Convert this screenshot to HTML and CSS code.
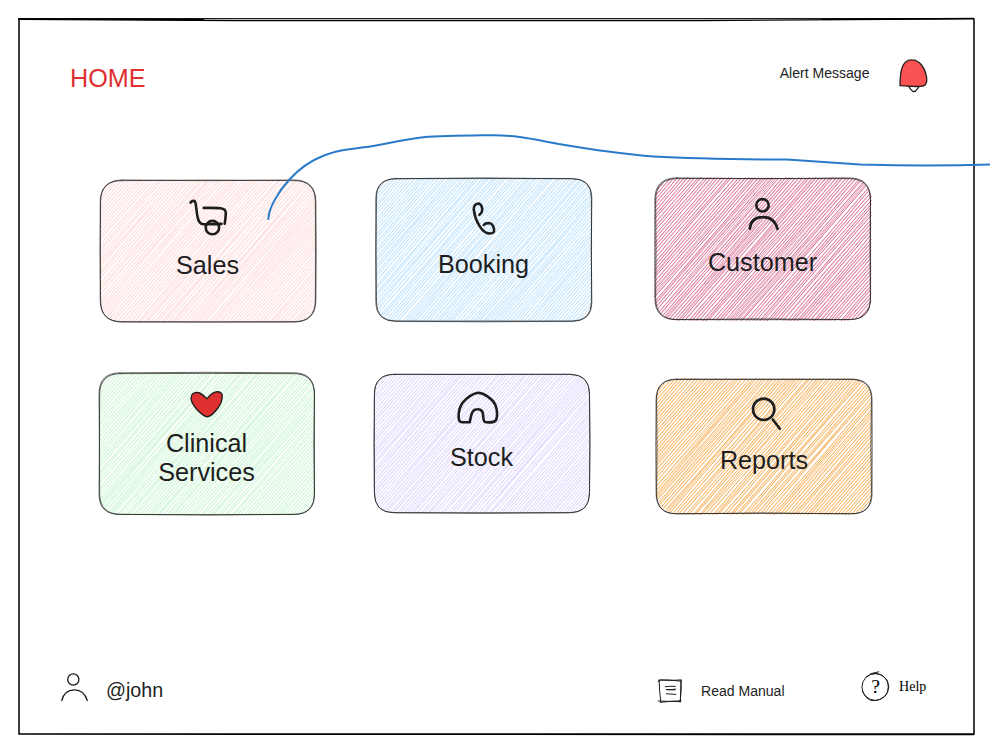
FILE: index.html
```html
<!DOCTYPE html>
<html lang="en">
<head>
<meta charset="utf-8">
<title>Home</title>
<link rel="stylesheet" href="styles.css">
</head>
<body>
<div class="frame">
  <svg class="frame-outline" viewBox="18 16 958 722" aria-hidden="true">
    <path d="M19 18.6V734M974 18.5V734.7M18.3 734L974 734.6M18.3 733.9H974" stroke-width="1.5"/>
    <path d="M18.2 18.5H974" stroke-width="0.9"/>
    <path d="M18.2 19.3C110 19.4 180 20.2 236 20.5H700C800 20.3 900 19.2 974 18.8" stroke-width="1.3"/>
    <path d="M18.2 19Q110 18.8 204 19.6M822 19.4L974 18.4" stroke-width="1.4"/>
  </svg>
  <header class="topbar">
    <h1 class="title">HOME</h1>
    <div class="alert">
      <span class="small-text">Alert Message</span>
      <svg class="icon bell" viewBox="898 56 31 38">
        <path d="M908.7 86.5C910 88 911.5 91.7 914 91.7S917.5 88 919 86.7" stroke-width="1.2"/>
        <path d="M900 85.7C900 78 900.2 71 903 65.5C904.8 61.8 908.5 59.7 911.7 59.8C915.3 59.8 919.2 61.8 921.9 65.5C924.5 69 926 73.5 926.7 78C927 81 926.8 83 925.5 84.7C924.4 86.2 922.5 86.4 920 86.4C914 86.7 907 86.3 900 85.7Z" fill="#fa5252" stroke-width="1.3"/>
      </svg>
    </div>
  </header>

  <main class="tiles">
    <div class="tile-row">
      <a class="tile sales">
        <svg class="sketch" data-w="216" data-h="142" data-seed="11"></svg>
        <svg class="icon" viewBox="188 198 40 40"><path d="M190.6 202.6C191.5 201.3 194 200.2 194.9 201.3C196.4 204.5 196.3 212 197.6 217C198.3 221 199.7 223.8 203 224.2Q212 224.5 221.5 223.9M203.7 207.9C210 208 216 207.7 220.5 208.3C224 208.7 225.8 210 225.8 213Q225.7 218 224.7 223.7"/><circle cx="212.4" cy="227.6" r="6.7"/></svg>
        <span class="label">Sales</span>
      </a>
      <a class="tile booking">
        <svg class="sketch" data-w="216" data-h="144" data-seed="23"></svg>
        <svg class="icon" viewBox="464 200 40 40"><path d="M479.4 214.8C481.4 213.3 482.5 211 482.2 208.5C481.8 205 479.8 203.4 477.5 203.7C474.6 204.4 473.4 207.3 473.9 210.3C474.5 215.2 476.4 220.8 479.3 225.7C481.8 229.8 484.8 233 488.2 233.4C491 233.8 494 233 494.1 231C494.4 228 492.5 223.5 489.8 223.2C487.6 222.9 485 223.3 483.8 225"/></svg>
        <span class="label">Booking</span>
      </a>
      <a class="tile customer">
        <svg class="sketch" data-w="216" data-h="142" data-seed="37"></svg>
        <svg class="icon" viewBox="743.5 194 40 40"><circle cx="763" cy="205.3" r="6.2"/><path d="M750.3 228.7C751 221.5 755.5 217.2 763.2 217.1C771.5 216.8 776 221.5 778 228.9"/></svg>
        <span class="label">Customer</span>
      </a>
    </div>
    <div class="tile-row">
      <a class="tile clinical">
        <svg class="sketch" data-w="216" data-h="142" data-seed="41"></svg>
        <svg class="icon" viewBox="187 385 40 40"><path d="M207 398.7C204.8 397.2 201.5 392.8 197.7 392.5C193.5 392 191 394.6 191 398.5C191.3 402.5 194 406.3 197.2 409.8C200.4 413.2 204.2 416.8 207.6 416.7C211.5 416.5 215 411.8 217.9 408C220.8 404.1 222.5 399.5 222.2 395.4C222 392.5 219.4 391.5 216.2 391.9C212.1 392.4 209.4 395.9 207 398.7Z" fill="#e03131" stroke-width="1.4"/></svg>
        <span class="label">Clinical<br>Services</span>
      </a>
      <a class="tile stock">
        <svg class="sketch" data-w="216" data-h="139" data-seed="59"></svg>
        <svg class="icon" viewBox="462 388 40 40"><path class="store" d="M482.2 392.8C477 393.5 470 398.1 466.8 402.7C463.7 407 462.8 412 462.8 416.5C462.8 420 463.5 422.2 466.3 422.3L474 422.2C474.6 419 475 415.5 476.3 412.8C477.4 410 478.8 409.2 481.8 409.2C485.8 409.1 487.1 411 487.3 415C487.5 418.5 487.2 422.2 490.3 422.3C495.1 422.6 499.4 422.7 500.6 419.3C501.8 415 501.2 409.1 499.4 404.5C496.7 398.6 488 393.1 482.2 392.8Z"/></svg>
        <span class="label">Stock</span>
      </a>
      <a class="tile reports">
        <svg class="sketch" data-w="216" data-h="135" data-seed="67"></svg>
        <svg class="icon" viewBox="744 394 40 40"><circle cx="763.7" cy="409.3" r="10.7"/><path d="M772.8 419.5L779.8 428.8"/></svg>
        <span class="label">Reports</span>
      </a>
    </div>
  </main>

  <footer class="bottombar">
    <div class="account">
      <svg class="icon user" viewBox="60 672 30 30"><circle cx="73.3" cy="679.5" r="5.6"/><path d="M61.8 700.5C63.3 693.5 67.5 690 74.2 689.8S85 693.3 87.3 700.5"/></svg>
      <span class="user-name">@john</span>
    </div>
    <div class="manual">
      <svg class="icon book" viewBox="656 677 28 28"><path d="M658 681.8L660.2 679.8Q670 681.1 681 679.9L680.4 701.6Q670 700.8 660.3 702.3M658.5 680.2Q669 679.2 681.2 681.2M659.2 680.2Q659.1 690 660.8 701.4M658.2 701Q669 702 681 700.8M681.2 680Q681.5 690 680.1 702.2"/><path d="M665.2 686.7Q670 686 675.4 686.4M667.5 689.8L675.7 689.2M666.3 689.5L674.5 690M666.5 693.8L675.8 694.4"/></svg>
      <span class="small-text">Read Manual</span>
    </div>
    <div class="help">
      <span class="help-mark">
        <svg class="icon ring" viewBox="860 670 32 32"><circle cx="875.3" cy="687" r="13.4"/><path d="M866 677Q871 672.6 877 673.4T887 680Q890 688 886 695Q880 701 873 700.6T862.5 691M871 673.6L878.8 671.8"/></svg>
        <span class="question">?</span>
      </span>
      <span class="help-text">Help</span>
    </div>
  </footer>
</div>
<svg class="connector" viewBox="0 0 990 240" aria-hidden="true"><path d="M268.3 219C268.8 208 278 192 289 180C297 171 307 162 324 155.5C340 149 347 150 364 147.3C384 144.5 400 140 423 137.3C446 135.5 471 135.5 493 135.2C518 135.5 535 139.2 559 144C585 148.5 618 153.8 654 156.5C699 159 746 159.3 787 159.6C807 160.9 830 162.5 860 164.5C906 165.9 943 166.2 991 164.4"/></svg>
<script src="sketch.js"></script>
</body>
</html>
```
FILE: styles.css
```css
* {
  box-sizing: border-box;
}

body {
  margin: 0;
  width: 990px;
  height: 754px;
  position: relative;
  overflow: hidden;
  background: #fff;
  color: #1e1e1e;
  font-family: "Liberation Sans", Arial, sans-serif;
}

svg {
  display: block;
  fill: none;
  stroke: #1e1e1e;
  stroke-linecap: round;
  stroke-linejoin: round;
}

.frame {
  display: flex;
  flex-direction: column;
  width: 990px;
  height: 754px;
  padding: 54px 61px 50px 60px;
}

.frame-outline {
  position: absolute;
  left: 18px;
  top: 16px;
  width: 958px;
  height: 722px;
  stroke: #000;
  stroke-linecap: butt;
}

.topbar {
  display: flex;
  justify-content: space-between;
  align-items: flex-start;
  height: 124px;
  padding-left: 10px;
}

.title {
  margin: 10px 0 0;
  font-size: 25.2px;
  line-height: 29px;
  font-weight: 400;
  color: #e03131;
}

.alert {
  display: flex;
  gap: 28.5px;
}

.alert .small-text {
  margin-top: 11px;
}

.small-text {
  font-size: 14.05px;
  line-height: 16px;
  white-space: nowrap;
}

.bell {
  width: 31px;
  height: 38px;
  margin-top: 2px;
}

.tile-row {
  display: flex;
  align-items: flex-start;
  height: 195px;
}

.tile {
  position: relative;
  display: flex;
  flex-direction: column;
  align-items: center;
  flex: 0 0 216px;
}

.tile .icon {
  position: relative;
  width: 40px;
  height: 40px;
  stroke-width: 2.6px;
}

.tile .store {
  transform: translateX(-4.2px);
}

.stock .icon {
  overflow: visible;
}

.label {
  position: relative;
  padding-right: 1px;
  font-size: 25.2px;
  line-height: 29px;
  text-align: center;
}

.sketch {
  position: absolute;
  inset: 0;
  width: 100%;
  height: 100%;
  overflow: visible;
}

.sales {
  height: 142px;
  margin: 2px 0 0 40px;
  padding-top: 18px;
  --hatch: #ffd6d6;
}

.booking {
  height: 144px;
  margin-left: 60px;
  padding-top: 22px;
  --hatch: #b9e0fd;
}

.customer {
  height: 142px;
  margin-left: 63px;
  padding-top: 16px;
  --hatch: #dc7299;
}

.clinical {
  height: 142px;
  margin-left: 39px;
  padding-top: 12px;
  --hatch: #c6f4cd;
}

.stock {
  height: 139px;
  margin: 1px 0 0 59px;
  padding-top: 14px;
  --hatch: #dcd3fd;
}

.reports {
  height: 135px;
  margin: 6px 0 0 66px;
  padding-top: 15px;
  --hatch: #f7b05a;
}

.sales .label { margin-top: 13px; }
.booking .label { margin-top: 10px; }
.customer .label { margin-top: 14px; }
.clinical .label { margin-top: 4px; }
.stock .label { margin-top: 15px; }
.reports .label { margin-top: 12px; padding-right: 0; }

.hatch {
  stroke: var(--hatch);
  stroke-width: 0.75px;
}

.edge {
  stroke-width: 0.8px;
  stroke-opacity: 0.85;
}

.bottombar {
  display: flex;
  align-items: flex-start;
  margin-top: auto;
  height: 34px;
}

.account,
.manual,
.help {
  display: flex;
}

.account {
  margin-top: 2px;
  width: 596px;
  gap: 16px;
}

.user {
  width: 30px;
  height: 30px;
  stroke-width: 1.3px;
}

.user-name {
  margin-top: 7px;
  font-size: 19.7px;
  line-height: 23px;
}

.manual {
  margin-top: 7px;
  width: 204px;
  gap: 17px;
}

.manual .small-text {
  margin-top: 6px;
}

.book {
  width: 28px;
  height: 28px;
  stroke-width: 1px;
}

.help {
  gap: 7px;
  font-family: "Liberation Serif", "Times New Roman", serif;
}

.help-mark {
  display: grid;
  width: 32px;
  height: 32px;
}

.ring,
.question {
  grid-area: 1 / 1;
}

.ring {
  width: 32px;
  height: 32px;
  stroke-width: 1px;
}

.question {
  font-size: 19.7px;
  line-height: 33px;
  text-align: center;
  padding-right: 1px;
  color: #000;
}

.help-text {
  margin-top: 8px;
  font-size: 14.05px;
  line-height: 16px;
  color: #000;
}

.connector {
  position: absolute;
  left: 0;
  top: 0;
  width: 990px;
  height: 240px;
  stroke: #2a7acb;
  stroke-width: 2px;
  pointer-events: none;
}
```
FILE: sketch.js
```js
// Draws the hand-sketched hatch fill and the doubled outline of each tile.
function random(seed) {
  let s = seed;
  return function () {
    s = (s * 16807) % 2147483647;
    return s / 2147483647;
  };
}

function add(svg, cls, d) {
  const path = document.createElementNS("http://www.w3.org/2000/svg", "path");
  path.setAttribute("class", cls);
  path.setAttribute("d", d);
  svg.appendChild(path);
}

const RADIUS = 21;
const SLOPE = Math.tan(49 * Math.PI / 180);

// Whether a point lies within the rounded rectangle.
function inside(x, y, w, h) {
  if (x < 0 || y < 0 || x > w || y > h) return false;
  const dx = Math.max(RADIUS - x, x - (w - RADIUS), 0);
  const dy = Math.max(RADIUS - y, y - (h - RADIUS), 0);
  return dx * dx + dy * dy <= RADIUS * RADIUS;
}

document.querySelectorAll(".sketch").forEach(function (svg) {
  const w = +svg.dataset.w;
  const h = +svg.dataset.h;
  const rnd = random(+svg.dataset.seed * 7919);
  const j = function (n) { return (rnd() * 2 - 1) * n; };
  svg.setAttribute("viewBox", "0 0 " + w + " " + h);

  let d = "";
  for (let start = 2; start < w + h / SLOPE; start += 3.38) {
    let first = null;
    let last = null;
    for (let y = 0; y <= h; y += 0.5) {
      const x = start - y / SLOPE;
      if (inside(x, y, w, h)) {
        if (!first) first = [x, y];
        last = [x, y];
      }
    }
    if (!first) continue;
    const spread = Math.min(1, Math.hypot(first[0] - last[0], first[1] - last[1]) / 150);
    for (let k = 0; k < 2; k++) {
      const mx = (first[0] + last[0]) / 2 + j(2.1) * spread;
      const my = (first[1] + last[1]) / 2 + j(1.6) * spread;
      d += "M" + (first[0] + j(0.7) * spread).toFixed(2) + " " + (first[1] + j(0.6)).toFixed(2) +
        "Q" + mx.toFixed(2) + " " + my.toFixed(2) + " " +
        (last[0] + j(0.7) * spread).toFixed(2) + " " + (last[1] + j(0.9)).toFixed(2);
    }
  }
  add(svg, "hatch", d);

  for (let k = 0; k < 2; k++) {
    const r = RADIUS + j(1.5);
    const t = 0.3 + j(0.5), b = h - 0.4 + j(0.5), l = 0.3 + j(0.4), e = w - 0.3 + j(0.4);
    add(svg, "edge",
      "M" + r + " " + t +
      "Q" + w / 2 + " " + (t + j(1.7)) + " " + (w - r) + " " + t +
      "Q" + e + " " + t + " " + e + " " + r +
      "Q" + (e + j(1.3)) + " " + h / 2 + " " + e + " " + (h - r) +
      "Q" + e + " " + b + " " + (w - r) + " " + b +
      "Q" + w / 2 + " " + (b + j(1.4)) + " " + r + " " + b +
      "Q" + l + " " + b + " " + l + " " + (h - r) +
      "Q" + (l + j(1.5)) + " " + h / 2 + " " + l + " " + r +
      "Q" + l + " " + t + " " + r + " " + t);
  }
});
```
